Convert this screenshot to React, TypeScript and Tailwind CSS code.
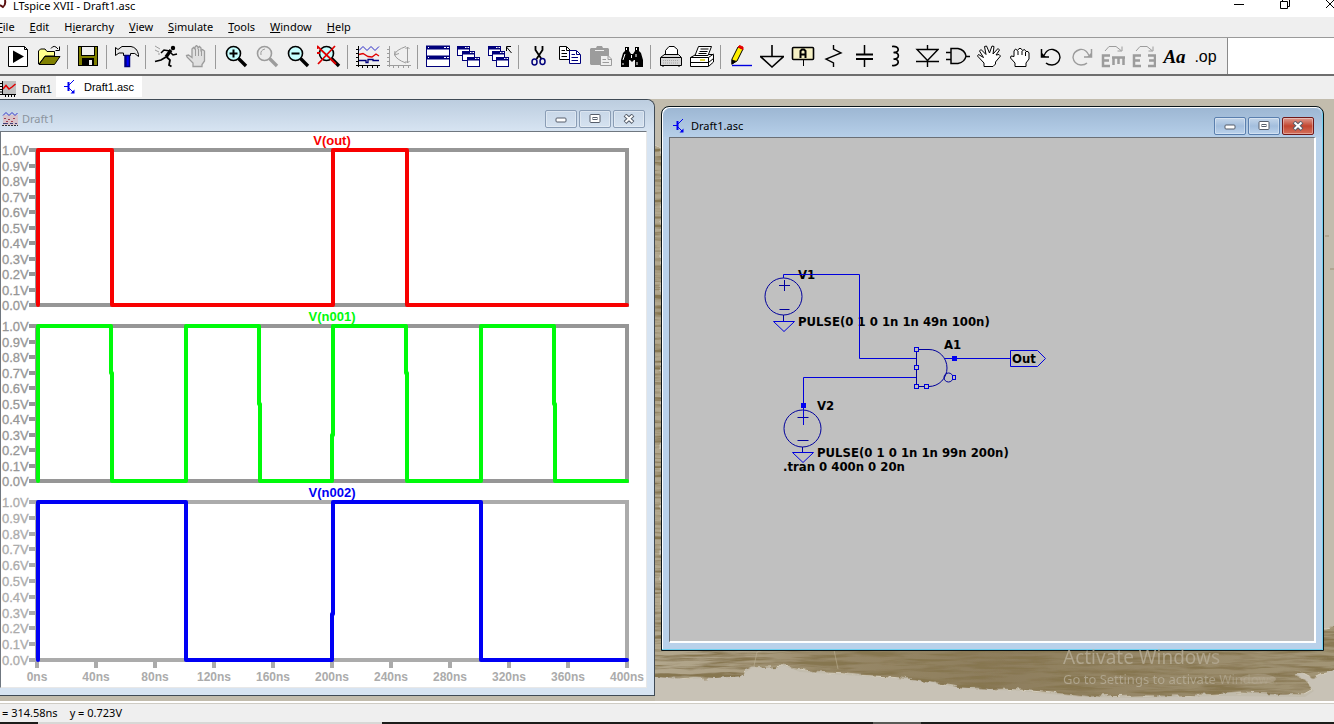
import type { ReactNode } from "react";

type Tool = { name: string; off?: boolean; art: ReactNode };

const NAVY = "#00007b";
const GREY = "#9c9c9c";

const lens = (stroke: string, fill: string) => (
  <>
    <circle cx="9.500" cy="8.500" r="7" fill={fill} stroke={stroke} strokeWidth="1.6" />
    <path d="M14.500 13.500L22 21" stroke={stroke} strokeWidth="3.4" />
  </>
);

const miniWindow = (x: number, y: number) => (
  <g>
    <rect x={x + 0.5} y={y + 0.5} width="12" height="9" fill="#fff" stroke={NAVY} />
    <rect x={x} y={y} width="13" height="3.500" fill={NAVY} />
    <path d={`M${x + 8} ${y + 1.5}h1.500M${x + 10.5} ${y + 1.5}h1.500`} stroke="#fff" />
  </g>
);

const groups: Tool[][] = [
  [
    {
      name: "Run",
      art: (
        <>
          <path d="M2.500 1.500H18.500L21.500 4.500V21.500H2.500Z" fill="#fff" stroke="#000" />
          <path d="M18.500 1.500V4.500H21.500" stroke="#000" />
          <path d="M7 5.500L18 11.500L7 18Z" fill="#000" />
        </>
      ),
    },
    {
      name: "Open",
      art: (
        <>
          <path d="M1.500 19V6L3.500 4H8L10 6.500H17.500V11H8L2 19" fill="#ffff8c" stroke="#000" />
          <path d="M2 19.500L8 11.500H23L17.500 19.500Z" fill="#808000" stroke="#000" />
          <path d="M14 3.500Q17 -1 21 4" stroke="#000" />
          <path d="M22.500 1.500V5.500H18.500" stroke="#000" />
        </>
      ),
    },
  ],
  [
    {
      name: "Save",
      art: (
        <>
          <rect x="2.500" y="1.500" width="19" height="19" fill="#808000" stroke="#000" />
          <rect x="5.500" y="1.500" width="13" height="9" fill="#f0f0f0" stroke="#000" />
          <rect x="6" y="13" width="12" height="8" fill="#000" />
          <rect x="13" y="15" width="3" height="5" fill="#f0f0f0" />
        </>
      ),
    },
  ],
  [
    {
      name: "Control panel",
      art: (
        <>
          <path
            d="M0.500 2.500L3 4.500L7 1.500H16Q22 2.500 23.500 9.500V11.500Q20 7 15.500 8.500V10.500H8.500V8L4 8L0.500 10.500Z"
            fill="#e7e7e7"
            stroke="#000"
          />
          <path d="M10 10.500H14.500V21.500H10Z" fill="#0000ff" stroke={NAVY} strokeWidth="1.500" />
          <path d="M11 10.500V21" stroke="#000060" />
        </>
      ),
    },
  ],
  [
    {
      name: "Run simulation",
      art: (
        <>
          <circle cx="19" cy="3" r="2.200" fill="#000" />
          <path d="M17 5L12 12" stroke="#000" strokeWidth="3.400" />
          <path d="M16 6L10 5L7 8M16 7L19 10L23 9" stroke="#000" strokeWidth="1.500" />
          <path d="M12 12L7 15L1 16.500M12.500 12L16 15L15 20L17.500 21.500" stroke="#000" strokeWidth="1.800" />
          <path d="M1 1L6 4M1 5L5 7M4 9H6" stroke={GREY} />
        </>
      ),
    },
    {
      name: "Halt",
      off: true,
      art: (
        <>
          <path
            d="M8 21.500V18L2 12L1.500 10.500L3.500 10L7 12.500V4L8.500 2.500L10 4V2L11.500 0.500L13 2V3L14.500 1.500L16 3V5.500L17.500 4.500L19.500 6V16L17 19.500V21.500Z"
            fill="#e0e0e0"
            stroke={GREY}
            strokeWidth="1.300"
          />
          <path d="M10.500 4V11M13.500 4V11M16.500 6V11" stroke={GREY} />
        </>
      ),
    },
  ],
  [
    {
      name: "Zoom in",
      art: (
        <>
          {lens("#000", "#c6ffff")}
          <path d="M9.500 4.500V12.500M5.500 8.500H13.500" stroke="#000" strokeWidth="2" />
        </>
      ),
    },
    {
      name: "Pan",
      off: true,
      art: (
        <>
          {lens(GREY, "#ececec")}
          <path d="M6 10Q5 5 10 4" stroke={GREY} />
        </>
      ),
    },
    {
      name: "Zoom out",
      art: (
        <>
          {lens("#000", "#c6ffff")}
          <path d="M5.500 8.500H13.500" stroke="#000" strokeWidth="2" />
        </>
      ),
    },
    {
      name: "Zoom to fit",
      art: (
        <>
          {lens("#000", "#c6ffff")}
          <path d="M0 1L19 19M18 1L1 19M0 8H3M0 1V4" stroke="#e00000" strokeWidth="1.800" />
        </>
      ),
    },
  ],
  [
    {
      name: "Autorange",
      art: (
        <>
          <path d="M2.500 1V22M0 20.500H24M0 4.500H2M0 8.500H2M0 12.500H2M0 16.500H2M6.500 20V23M11.500 20V23M16.500 20V23M21.500 20V23" stroke="#000" />
          <path d="M3 5.500L7 1.500L11 5.500L15 1.500L19 5.500L23 1.500" stroke="#2929c8" />
          <path d="M3 9.500L7 8.500L12 11.500L16 12L20 9L23 11" stroke="#e00000" strokeWidth="1.300" />
          <path d="M3 15.500H10V17.500H12V14.500H17V15.500H23" stroke={NAVY} strokeWidth="1.300" />
        </>
      ),
    },
    {
      name: "Smith chart",
      off: true,
      art: (
        <>
          <path d="M2.500 1V22M0 20.500H24M0 4.500H2M0 8.500H2M0 12.500H2M0 16.500H2M6.500 20V23M11.500 20V23M16.500 20V23M21.500 20V23" stroke={GREY} />
          <path d="M19 1.500Q9 5 7.500 9.500Q9 14.500 19 18M20.500 2V18M18.500 4L20.500 2L22.500 4M18.500 16L20.500 18L22.500 16M8 6L7.500 10L12 8.500" stroke={GREY} />
        </>
      ),
    },
  ],
  [
    {
      name: "Tile windows",
      art: (
        <>
          <rect x="0.500" y="1.500" width="23" height="20" fill="#fff" stroke={NAVY} />
          <path d="M0 2.500H24M0 12.500H24" stroke={NAVY} strokeWidth="4" />
          <path d="M2 2.500H3M18 2.500H20M21 2.500H23M2 12.500H3M18 12.500H20M21 12.500H23" stroke="#fff" />
        </>
      ),
    },
    {
      name: "Cascade windows",
      art: (
        <>
          {miniWindow(0, 1)}
          {miniWindow(5, 6)}
          {miniWindow(10, 12)}
        </>
      ),
    },
    {
      name: "Close all windows",
      art: (
        <>
          {miniWindow(0, 1)}
          {miniWindow(4, 6)}
          {miniWindow(8, 12)}
          <path d="M23.500 8L18.500 2M18.500 6V1.500H23" stroke="#000" />
        </>
      ),
    },
  ],
  [
    {
      name: "Cut",
      art: (
        <>
          <path d="M8.500 1V5L14.500 14M15.500 1V5L9.500 14" stroke="#000" strokeWidth="1.800" />
          <ellipse cx="7.500" cy="17" rx="2.500" ry="3" stroke={NAVY} strokeWidth="1.500" />
          <ellipse cx="15.500" cy="16.500" rx="2.500" ry="3" stroke={NAVY} strokeWidth="1.500" />
        </>
      ),
    },
    {
      name: "Copy",
      art: (
        <>
          <path d="M1.500 1.500H8.500L12.500 5.500V14.500H1.500Z" fill="#fff" stroke="#000" />
          <path d="M3.500 5.500H7M3.500 8.500H9M3.500 11.500H9M8.500 2V5.500H12" stroke="#000" />
          <path d="M11.500 5.500H18.500L22.500 9.500V18.500H11.500Z" fill="#fff" stroke={NAVY} />
          <path d="M13.500 9.500H17M13.500 12.500H20M13.500 15.500H20M18.500 6V9.500H22" stroke={NAVY} />
        </>
      ),
    },
    {
      name: "Paste",
      off: true,
      art: (
        <>
          <path d="M1 4L2 3H7L8 1H13L14 3H19L20 4V18L19 20H2L1 19Z" fill={GREY} />
          <path d="M6 5.500H15" stroke="#efefef" />
          <path d="M11.500 10.500H19L22.500 14V20.500H11.500Z" fill="#efefef" stroke={GREY} />
          <path d="M13.500 14.500H17M13.500 17.500H20M19 11V14.500H22" stroke={GREY} />
        </>
      ),
    },
    {
      name: "Find",
      art: (
        <>
          <path
            d="M5 2H9V6L11 9H13L15 6V2H19V6L21 8L23 15V22H15V15H14L12 17L10 15H9V22H1V15L3 8L5 6Z"
            fill="#000"
          />
          <path d="M6.500 3V5M16.500 3V5M5 9L3 15M16 9V12M3 18V20M17 17V20M11.500 10V13" stroke="#fff" />
        </>
      ),
    },
  ],
  [
    {
      name: "Print setup",
      art: (
        <>
          <path d="M1.500 12.500L5.500 9.500H19.500L22.500 12.500V20.500H1.500Z" fill="#d6d6d6" stroke="#000" />
          <path d="M6.500 9.500V5.500L10 1.500H15L18.500 4.500V9.500" fill="#fff" stroke="#000" />
          <path d="M2 12.500H22M5 9.500H19M4 20.500V22M20 20.500V22" stroke="#000" />
          <path d="M4 15.500H20M4 18H20" stroke="#a8a8a8" strokeDasharray="1 1" />
        </>
      ),
    },
    {
      name: "Print",
      art: (
        <>
          <path d="M0.500 12.500L6 9.500H23.500V17L18.500 21.500H0.500Z" fill="#fff" stroke="#000" />
          <path d="M0.500 12.500H18.500V21M18.500 12.500L23.500 9M1 17.500H18.500L23.500 13.500" stroke="#000" />
          <path d="M5 10.500L8.500 1.500H21.500L18 10.500Z" fill="#fff" stroke="#000" />
          <path d="M10.500 4H18.500M9.500 6.500H17.500M8.500 8.500H16.500" stroke="#000" />
          <path d="M10 15H15" stroke="#d8c800" strokeWidth="1.500" />
        </>
      ),
    },
  ],
  [
    {
      name: "Wire",
      art: (
        <>
          <path d="M3 14L9 2L14 4L8 16L3 19Z" fill="#ffef00" stroke="#000" />
          <path d="M9 2L10.500 0.500L14 2V4.500Z" fill="#f00000" stroke="#e00000" />
          <path d="M2.500 14.500V20L7.500 16Z" fill="#000" />
          <path d="M3 20.500H23" stroke="#0000e0" strokeWidth="1.400" />
        </>
      ),
    },
    {
      name: "Ground",
      art: <path d="M12 0V11M0.500 11.500H23.500L12 22Z" stroke="#000" strokeWidth="1.600" />,
    },
    {
      name: "Label net",
      art: (
        <>
          <rect x="1.500" y="2.500" width="21" height="12" rx="1" fill="#f5f0c4" stroke="#000" strokeWidth="1.600" />
          <path d="M9.500 13V6L11 4.500H13L14.500 6V13M9.500 9.500H14.500" stroke="#000" strokeWidth="2" />
          <path d="M12.500 15V21" stroke="#000" />
        </>
      ),
    },
    {
      name: "Resistor",
      art: <path d="M11.500 0V4L19 8L4 14L11.500 18V22" stroke="#000" strokeWidth="1.400" />,
    },
    {
      name: "Capacitor",
      art: (
        <>
          <path d="M11.500 0V9M11.500 14V22" stroke="#000" strokeWidth="1.500" />
          <path d="M3 9.500H20M3 14H20" stroke="#000" strokeWidth="2" />
        </>
      ),
    },
    {
      name: "Inductor",
      art: (
        <path
          d="M8 1.500C16 0.500 16 8 9.500 7.500C16 7 16 14.500 9.500 14C16 13.500 16 21.500 8 20.500"
          stroke="#000"
          strokeWidth="1.700"
        />
      ),
    },
    {
      name: "Diode",
      art: <path d="M12.500 0V4.500M12.500 16V22M2 4.500H23L12.500 15.500ZM1 16.500H24" stroke="#000" strokeWidth="1.400" />,
    },
    {
      name: "Component",
      art: <path d="M0 7.500H5M0 14.500H5M5 3.500H12Q19 5 20 11Q19 17 12 18.500H5ZM20 11.500H24" fill="#e4e4e4" stroke="#000" strokeWidth="1.500" />,
    },
    {
      name: "Move",
      art: (
        <path
          d="M7 21.500V18L0.500 11L1.500 9.500L6.500 12.500L2.500 6L4 4.500L9 9.500L7.500 1.500L9.500 1L12.500 8L15 1L17 1.500L16 9L21 3.500L22.500 5L19 10L22 9.500L23.500 11L18.500 17V19L16 21.500Z"
          fill="#fff"
          stroke="#000"
        />
      ),
    },
    {
      name: "Drag",
      art: (
        <>
          <path
            d="M7 21.500V18L2.500 13L3 11L6 11.500V6L7.500 4L9.500 5.500L11 3.500L13 3.500L14.500 5.500L16.500 4.500L18 6.500L20 6.500L21 8V14L18 18V21.500Z"
            fill="#fff"
            stroke="#000"
          />
          <path d="M10 6V10M14 6V10M17.500 7V11" stroke="#000" />
        </>
      ),
    },
    {
      name: "Undo",
      art: (
        <>
          <path d="M5 10.500Q8 3.500 14 4.500Q21 6.500 21 12.500Q20 19.500 13 20Q9 20 7 18" stroke="#000" strokeWidth="1.400" />
          <path d="M2.500 4V12H10" stroke="#000" strokeWidth="1.500" />
          <path d="M2 7L7 12H2Z" fill="#000" />
        </>
      ),
    },
    {
      name: "Redo",
      off: true,
      art: (
        <>
          <path d="M19 10.500Q16 3.500 10 4.500Q3 6.500 3 12.500Q4 19.500 11 20Q15 20 17 18" stroke={GREY} strokeWidth="1.400" />
          <path d="M21.500 4V12H14" stroke={GREY} strokeWidth="1.500" />
          <path d="M22 7L17 12H22Z" fill={GREY} />
        </>
      ),
    },
    {
      name: "Rotate",
      off: true,
      art: (
        <>
          <path d="M9 10.500H2V21H9M2 15.500H8" stroke={GREY} strokeWidth="2.500" />
          <path d="M11 12.500H24M12.500 12V20M17.500 12V19M22.500 12V20" stroke={GREY} strokeWidth="2.500" />
          <path d="M4 6L8 1.500H15L20 5.500M21 1.500V6H16.500" stroke={GREY} />
        </>
      ),
    },
    {
      name: "Mirror",
      off: true,
      art: (
        <>
          <path d="M9 10.500H2V21H9M2 15.500H8" stroke={GREY} strokeWidth="2.500" />
          <path d="M16 10.500H23V21H16M17 15.500H23" stroke={GREY} strokeWidth="2.500" />
          <path d="M4 6L8 1.500H15L20 5.500M21 1.500V6H16.500" stroke={GREY} />
        </>
      ),
    },
  ],
];

const menus = ["File", "Edit", "Hierarchy", "View", "Simulate", "Tools", "Window", "Help"];
const accelerators: Record<string, number> = { Hierarchy: 1 };

function TransistorIcon() {
  return (
    <svg viewBox="0 0 14 16" className="h-4 w-3.5 shrink-0" fill="none" aria-hidden="true">
      <path d="M0 7.500H4M5 6L10 1M5 9L10 14" stroke="#0000f0" />
      <path d="M4.500 3V12" stroke="#0000f0" strokeWidth="2" />
      <path d="M10.500 10.500V14.500H6.500Z" fill="#0000f0" />
    </svg>
  );
}

function WaveIcon() {
  return (
    <svg viewBox="0 0 16 16" className="h-4 w-4 shrink-0" fill="none" aria-hidden="true">
      <rect x="1" y="4" width="15" height="10" fill="#d9c4cb" />
      <path d="M1 4.500L4 1.500L7 4.500L10 1.500L13 4.500L15.500 2" stroke="#3535c8" />
      <path d="M2 7.500H4M6 8.500H8M11 7.500H13M4 10.500H6M9 10.500H11" stroke="#a04050" />
      <path d="M1 12.500H6M8 12.500H11M13 12.500H15" stroke="#40407a" />
      <path d="M0 14.500H16" stroke="#333" strokeDasharray="2 1" />
    </svg>
  );
}

function PlotTabIcon() {
  return (
    <svg viewBox="0 0 16 16" className="h-4 w-4 shrink-0" fill="none" aria-hidden="true">
      <rect x="2" y="0" width="14" height="13" fill="#c0c0c0" />
      <path d="M2.500 0V14M0 13.500H16M0 2.500H2M0 5.500H2M0 8.500H2M0 11H2M5.500 13V16M8.500 13V16M11.500 13V16M14.500 13V16" stroke="#000" />
      <path d="M3 8L6 4.500L9 8L12 6L15.500 3" stroke="#e00000" strokeWidth="1.500" />
    </svg>
  );
}

function CaptionButtons({ active = false }: { active?: boolean }) {
  const base = active
    ? "border-[#5a7fae] bg-linear-to-b from-[#c4d6ea] via-[#a3bedd] to-[#bcd3ec]"
    : "border-[#8a9db5] bg-linear-to-b from-[#c8d7e8] to-[#d5e2f0]";
  const close = active ? "border-[#701818] bg-linear-to-b from-[#dc9a90] via-[#c2452f] to-[#d4705c]" : base;
  const cell = "flex h-[18px] w-8 items-center justify-center rounded-[2px] border shadow-[inset_0_0_0_1px_rgba(255,255,255,0.35)]";
  return (
    <div className="flex gap-0.5">
      <button aria-label="Minimize" className={`${cell} ${base}`}>
        <svg viewBox="0 0 12 10" className="h-2.5 w-3" aria-hidden="true">
          <rect x="1" y="4" width="10" height="4" rx="1" fill="#fff" stroke="#555d6a" />
        </svg>
      </button>
      <button aria-label="Maximize" className={`${cell} ${base}`}>
        <svg viewBox="0 0 12 10" className="h-2.5 w-3" aria-hidden="true">
          <rect x="1" y="0.500" width="10" height="8" rx="1" fill="#fff" stroke="#555d6a" />
          <rect x="4" y="3.500" width="4" height="2" fill="#fff" stroke="#555d6a" />
        </svg>
      </button>
      <button aria-label="Close" className={`${cell} ${close}`}>
        <svg viewBox="0 0 12 10" className="h-2.5 w-3" aria-hidden="true">
          <path d="M2 1L10 8.500M10 1L2 8.500" stroke="#555d6a" strokeWidth="4" />
          <path d="M2.500 1.500L9.500 8M9.500 1.500L2.500 8" stroke="#fff" strokeWidth="2" />
        </svg>
      </button>
    </div>
  );
}

type Pane = { label: string; color: string; grid: string; top: number; bottom: number; path: string };

const panes: Pane[] = [
  {
    label: "V(out)",
    color: "#f80000",
    grid: "#969696",
    top: 18,
    bottom: 173,
    path: "M37 173V18H111V173H332V18H406V173H626",
  },
  {
    label: "V(n001)",
    color: "#00fa0a",
    grid: "#969696",
    top: 194,
    bottom: 349,
    path: "M37 349V194H110V241H111V349H185V194H258V272H259V349H331V303H332V194H405V241H406V349H480V194H553V272H554V349H626",
  },
  {
    label: "V(n002)",
    color: "#0000f4",
    grid: "#ababab",
    top: 370,
    bottom: 528,
    path: "M37 528V370H185V528H331V482H332V370H480V528H626",
  },
];

const volts = ["1.0V", "0.9V", "0.8V", "0.7V", "0.6V", "0.5V", "0.4V", "0.3V", "0.2V", "0.1V", "0.0V"];
const times = [0, 40, 80, 120, 160, 200, 240, 280, 320, 360, 400];

function Waveforms() {
  return (
    <svg
      viewBox="0 0 645 555"
      className="block w-full font-['Liberation_Sans',Arial,sans-serif]"
      fill="none"
      role="img"
      aria-label="Waveforms"
    >
      {panes.map((p) => (
        <g key={p.label}>
          <rect x="36" y={p.top} width="590" height={p.bottom - p.top} stroke={p.grid} strokeWidth="4" />
          {volts.map((v, i) => {
            const y = Math.round(p.top + ((p.bottom - p.top) * i) / 10);
            return (
              <g key={v}>
                <path d={`M28 ${y}H36`} stroke={p.grid} strokeWidth="4" />
                <text x="1" y={y + 5} fontSize="13" fill={p.grid} stroke={p.grid} strokeWidth="0.300">
                  {v}
                </text>
              </g>
            );
          })}
          <path d={p.path} stroke={p.color} strokeWidth="4" strokeLinejoin="round" strokeLinecap="round" />
          <text x="331" y={p.top - 5} fontSize="13" fontWeight="700" textAnchor="middle" fill={p.color}>
            {p.label}
          </text>
        </g>
      ))}
      {times.map((t) => {
        const x = 36 + Math.round((t * 590) / 400);
        return (
          <g key={t}>
            <path d={`M${x} 530V536`} stroke="#ababab" strokeWidth="4" />
            <text x={x} y="549" fontSize="12" fontWeight="700" textAnchor="middle" fill="#ababab">
              {t}ns
            </text>
          </g>
        );
      })}
    </svg>
  );
}

const handles = [
  [246, 212],
  [246, 230],
  [246, 249],
  [256, 249],
];

function Schematic() {
  return (
    <svg
      viewBox="0 0 644 503"
      className="block w-full font-['DejaVu_Sans_Condensed','Noto_Sans',sans-serif]"
      fill="none"
      role="img"
      aria-label="Schematic"
    >
      <g fontSize="13" fontWeight="700" fill="#000">
        <text x="128" y="141">V1</text>
        <text x="128" y="188">PULSE(0 1 0 1n 1n 49n 100n)</text>
        <text x="274" y="211">A1</text>
        <text x="147" y="272">V2</text>
        <text x="147" y="319">PULSE(0 1 0 1n 1n 99n 200n)</text>
        <text x="113" y="333">.tran 0 400n 0 20n</text>
        <text x="342" y="225">Out</text>
      </g>
      <g stroke="#00009c">
        <circle cx="113.500" cy="158.500" r="18.500" />
        <path d="M113.500 177V184M109 147.500H120M114.500 142V153M109.500 171.500H119.500" />
        <circle cx="132.500" cy="290.500" r="18.500" />
        <path d="M132.500 309V315M127.500 279.500H138.500M127.500 302.500H138.500" />
        <path d="M246.500 211.500H259A18 18.500 0 0 1 259 248.500H246.500Z" />
        <circle cx="278.500" cy="239.500" r="4.500" />
      </g>
      <g stroke="#0000dc">
        <path d="M113.500 140V136.500H189.500V220.500H246M246 239.500H133.500V287M275 220.500H340" />
        <path d="M103.500 183.500H124.500L114 193.500ZM122.500 314.500H143.500L133 324.500Z" />
        <path d="M340.500 212.500H367.500L375.500 220.500L367.500 228.500H340.500Z" />
        {handles.map(([x, y]) => (
          <rect key={`${x}-${y}`} x={x - 1.5} y={y - 2.5} width="4" height="4" fill="#c0c0c0" />
        ))}
        <rect x="282.500" y="237.500" width="3" height="4" fill="#c0c0c0" />
      </g>
      <path d="M282 218H287V223H282ZM131 265H136V270H131Z" fill="#0000f0" />
    </svg>
  );
}

function Wallpaper() {
  return (
    <svg
      viewBox="0 0 1334 602"
      preserveAspectRatio="none"
      className="absolute inset-0 h-full w-full"
      aria-hidden="true"
    >
      <defs>
        <filter id="bark" x="0" y="0" width="100%" height="100%">
          <feTurbulence type="fractalNoise" baseFrequency="0.02 0.24" numOctaves="4" seed="8" result="noise" />
          <feColorMatrix in="noise" values="0 0 0 0 0.24  0 0 0 0 0.18  0 0 0 0 0.08  3.4 0 0 0 -1.400" result="streaks" />
          <feTurbulence type="fractalNoise" baseFrequency="0.09" numOctaves="3" seed="3" result="rough" />
          <feDisplacementMap in="SourceGraphic" in2="rough" scale="7" result="torn" />
          <feComposite in="streaks" in2="torn" operator="in" result="grain" />
          <feMerge>
            <feMergeNode in="torn" />
            <feMergeNode in="grain" />
          </feMerge>
        </filter>
        <linearGradient id="wood" x1="0" x2="1" y1="0" y2="0">
          <stop offset="0" stopColor="#b3a88e" />
          <stop offset="0.140" stopColor="#ac9f83" />
          <stop offset="0.240" stopColor="#998a6a" />
          <stop offset="0.500" stopColor="#8d7d5c" />
          <stop offset="1" stopColor="#a39677" />
        </linearGradient>
      </defs>
      <rect width="1334" height="602" fill="#c2bcad" />
      <path
        d="M655 578L690 580L740 577L752 569L785 567L800 573L860 577L915 580L960 589L1020 592L1080 598L1140 599L1220 597L1305 598L1314 592L1298 575L1340 568V602H655Z"
        fill="#c8c2b6"
      />
      <path
        d="M648 42L662 50V530H1326L1344 526V568L1322 574L1312 579L1300 573L1294 575L1308 583L1312 592L1305 596L1240 594L1180 597L1140 597L1100 598L1075 596L1020 591L960 588L915 580L860 576L815 573L785 567L752 569L740 577L690 580L648 577Z"
        fill="url(#wood)"
        stroke="#d6cfbf"
        filter="url(#bark)"
      />
      <path d="M754 567L757 553L764 551M834 551L838 570" stroke="#c4b99e" opacity="0.500" fill="none" />
      <path d="M1325 137H1329M1330 170H1334" stroke="#9c8f74" />
      <ellipse cx="1258" cy="580" rx="18" ry="5" fill="#cfc8b8" opacity="0.300" />
    </svg>
  );
}

export default function App() {
  return (
    <div className="flex min-h-screen flex-col overflow-hidden bg-[#efefef] font-['Noto_Sans',sans-serif] text-[11px] leading-4 text-black">
      <header className="flex h-[17px] items-start overflow-hidden bg-white">
        <svg viewBox="0 0 8 12" className="mr-[5px] h-3 w-2 shrink-0" fill="none" aria-hidden="true">
          <path d="M5 0Q6 5 3 7L0 5" stroke="#5a1010" strokeWidth="2" />
        </svg>
        <h1 className="flex-1 leading-3">LTspice XVII - Draft1.asc</h1>
        <div className="-mr-5 flex">
          <button aria-label="Minimize" className="flex h-2.5 w-[46px] justify-center">
            <svg viewBox="0 0 12 10" className="h-2.5 w-3" aria-hidden="true">
              <path d="M1 4.500H11" stroke="#000" />
            </svg>
          </button>
          <button aria-label="Restore" className="flex h-2.5 w-[46px] justify-center">
            <svg viewBox="0 0 12 10" className="h-2.5 w-3" fill="none" aria-hidden="true">
              <path d="M1.500 1.500H8.500V8.500H1.500ZM3.500 1V-1H10.500V6.500H9" stroke="#000" />
            </svg>
          </button>
          <button aria-label="Close" className="flex h-2.5 w-[46px] justify-center">
            <svg viewBox="0 0 12 10" className="h-2.5 w-3" aria-hidden="true">
              <path d="M1 0L10 9M10 -1L1 8" stroke="#000" />
            </svg>
          </button>
        </div>
      </header>

      <nav className="-ml-[3px] flex h-5 items-center gap-[15px]">
        {menus.map((m) => {
          const k = accelerators[m] ?? 0;
          return (
            <button key={m}>
              {m.slice(0, k)}
              <span className="underline underline-offset-1">{m[k]}</span>
              {m.slice(k + 1)}
            </button>
          );
        })}
      </nav>

      <div className="flex h-[39px] items-stretch border-t border-b-2 border-t-[#9a9a9a] border-b-[#6e6e6e] bg-white">
        <div className="flex items-center border-r border-[#8a8a8a] bg-[#efefef] pt-0.5 pr-1.5 pl-0.5" role="toolbar" aria-label="Tools">
          {groups.map((g, i) => (
            <div key={g[0].name} className="flex items-center">
              {i > 0 && <div className="mr-1 ml-[3px] h-6 w-px bg-[#9a9a9a]" />}
              {g.map((t) => (
                <button key={t.name} aria-label={t.name} disabled={t.off} className="flex h-6 w-[31px] items-center justify-center">
                  <svg viewBox="0 0 24 24" className="h-6 w-6" fill="none" aria-hidden="true">
                    {t.art}
                  </svg>
                </button>
              ))}
            </div>
          ))}
          <button
            aria-label="Text"
            className="h-6 w-[31px] text-center font-['Liberation_Serif',serif] text-[19px] leading-6 font-bold italic"
          >
            Aa
          </button>
          <button aria-label="SPICE directive" className="h-6 w-[31px] text-center font-['Liberation_Sans',sans-serif] text-base leading-5">
            .op
          </button>
        </div>
      </div>

      <div className="flex h-[23px] items-start font-['Liberation_Sans',Arial,sans-serif]" role="tablist">
        <button role="tab" aria-selected="false" className="flex h-[22px] items-center gap-1.5 pt-1 pr-1">
          <PlotTabIcon />
          Draft1
        </button>
        <button role="tab" aria-selected="true" className="flex h-[21px] items-center gap-1.5 bg-white pr-2 pl-2">
          <TransistorIcon />
          Draft1.asc
        </button>
      </div>

      <main className="relative grid flex-1 grid-cols-[minmax(0,655fr)_minmax(0,663fr)] items-start gap-x-1.5 pr-2.5">
        <Wallpaper />

        <section className="relative rounded-tr-lg border border-l-0 border-[#3f4a55] bg-[#d7e4f2] pr-[7px] pb-[7px]">
          <div className="-mr-[7px] flex h-[31px] items-center gap-1 rounded-tr-lg bg-linear-to-b from-[#bccddf] to-[#d7e4f2] pt-1.5 pr-[9px] pl-0.5">
            <WaveIcon />
            <h2 className="flex-1 text-[#8b949e]">Draft1</h2>
            <CaptionButtons />
          </div>
          <div className="border border-t-[#6f7780] border-r-[#e8e8e8] border-b-[#e8e8e8] border-l-[#6f7780] bg-white">
            <Waveforms />
          </div>
        </section>

        <section className="relative mt-[7px] mb-[50px] rounded-t-lg border border-[#0a1418] bg-[#b9d1ea] shadow-[inset_-1px_-1px_0_#6fd0f0,inset_1px_1px_0_#ffffff]">
          <div className="mx-px mt-px flex h-[29px] items-center gap-1 rounded-t-lg bg-linear-to-b from-[#9db7d3] to-[#b6cfe9] pt-1.5 pr-2 pl-2.5">
            <TransistorIcon />
            <h2 className="flex-1">Draft1.asc</h2>
            <CaptionButtons active />
          </div>
          <div className="mx-[7px] mb-[7px] border-t border-r-2 border-b-2 border-l border-t-[#6a6f76] border-r-white border-b-white border-l-[#6a6f76] bg-[#c0c0c0]">
            <Schematic />
          </div>
        </section>

        <p className="pointer-events-none absolute right-[38px] bottom-3 w-[233px] bg-linear-to-r from-[#bdb5a2]/70 from-60% to-transparent bg-clip-text text-[13px] leading-5 whitespace-nowrap text-transparent">
          <span className="block text-[19px] leading-6">Activate Windows</span>
          Go to Settings to activate Windows.
        </p>
      </main>

      <footer className="flex h-[21px] items-center gap-3 border-t-2 border-white pl-0.5 shadow-[inset_0_1px_0_#cfccc4]">
        <span>= 314.58ns</span>
        <span>y = 0.723V</span>
      </footer>
      <div className="flex h-0.5 bg-[#1c1c1a]">
        <div className="ml-[38px] w-[344px] bg-[#d8d8d6]" />
        <div className="ml-[491px] w-12 bg-[#5a5a56]" />
      </div>
    </div>
  );
}
